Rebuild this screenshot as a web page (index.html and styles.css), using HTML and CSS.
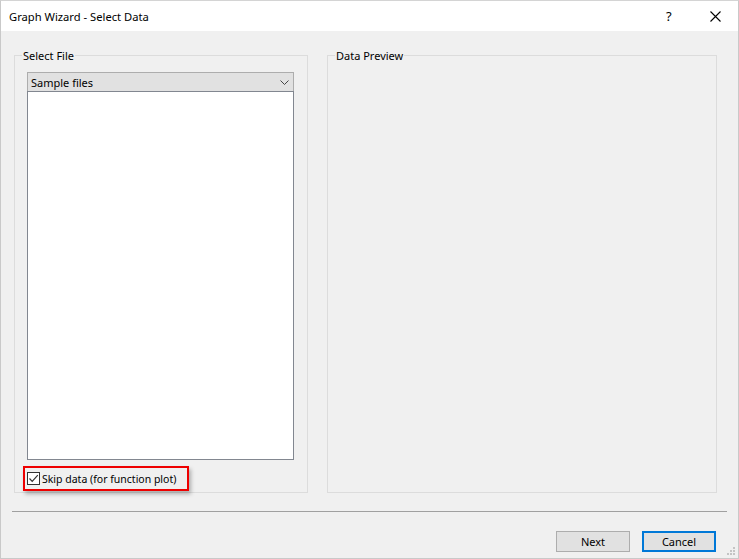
FILE: index.html
```html
<!DOCTYPE html>
<html>
<head>
 <meta charset="utf-8">
 <title>Graph Wizard - Select Data</title>
 <link rel="stylesheet" href="styles.css">
</head>
<body>
<div class="Window">
 <div class="TitleBar">
  <span class="TitleText">Graph Wizard - Select Data</span>
  <span class="TitleHelp">?</span>
  <span class="TitleClose">
   <svg width="11" height="11" viewBox="0 0 11 11"><path d="M0.5 0.5 L10.5 10.5 M10.5 0.5 L0.5 10.5" stroke="#000" stroke-width="1.1" fill="none"/></svg>
  </span>
 </div>

 <div class="DialogBody">
  <div class="GroupRow">
   <fieldset class="Group GroupFile">
    <legend>Select File</legend>
    <div class="Combo">
     <span>Sample files</span>
     <svg width="9" height="5" viewBox="0 0 9 5"><path d="M0.5 0.5 L4.5 4.5 L8.5 0.5" stroke="#444" stroke-width="1" fill="none"/></svg>
    </div>
    <div class="FileList"></div>
    <label class="SkipBox">
     <span class="Check">
      <svg width="11" height="11" viewBox="0 0 11 11"><path d="M1.5 5.5 L4.2 8.3 L9.8 2.2" stroke="#333" stroke-width="1.2" fill="none"/></svg>
     </span>
     Skip data (for function plot)
    </label>
   </fieldset>
   <fieldset class="Group GroupPreview">
    <legend>Data Preview</legend>
   </fieldset>
  </div>

  <hr class="Separator" />

  <div class="ButtonRow">
   <button class="DlgButton">Next</button>
   <button class="DlgButton DlgButtonDefault">Cancel</button>
  </div>
 </div>

 <svg class="Grip" width="9" height="9" viewBox="0 0 9 9">
  <rect x="6" y="0" width="2" height="2" fill="#c4c4c4"/>
  <rect x="3" y="3" width="2" height="2" fill="#c4c4c4"/>
  <rect x="6" y="3" width="2" height="2" fill="#c4c4c4"/>
  <rect x="0" y="6" width="2" height="2" fill="#c4c4c4"/>
  <rect x="3" y="6" width="2" height="2" fill="#c4c4c4"/>
  <rect x="6" y="6" width="2" height="2" fill="#c4c4c4"/>
 </svg>
</div>
</body>
</html>
```

FILE: styles.css
```css
html, body {
 margin:0;
 padding:0;
}
body {
 font-family:"Noto Sans", "Liberation Sans", Arial, sans-serif;
 font-size:11px;
 color:#000000;
 background:#ffffff;
}

.Window {
 position:relative;
 width:739px;
 height:559px;
 box-sizing:border-box;
 border:1px solid #c9c9c9;
 border-top-color:#d4d4d4;
 background:#f0f0f0;
 overflow:hidden;
}

/* Title bar */
.TitleBar {
 display:flex;
 align-items:center;
 height:30px;
 background:#ffffff;
}
.TitleText {
 margin-left:8px;
 flex:1;
 font-size:11.2px;
}
.TitleHelp {
 width:14px;
 margin-right:30px;
 font-size:13px;
}
.TitleClose {
 display:flex;
 margin-right:17px;
}

/* Body */
.DialogBody {
 padding:17px 21px 0 13px;
}
.GroupRow {
 display:flex;
 gap:19px;
}
.Group {
 margin:0;
 border:1px solid #dcdcdc;
 height:445px;
 box-sizing:border-box;
}
.Group legend {
 padding:0 1px;
 margin-left:-5px;
 line-height:15px;
 font-size:11px;
}
.GroupFile {
 width:294px;
 padding:0 13px 1px 12px;
 display:flex;
 flex-direction:column;
}
.GroupPreview {
 width:390px;
 padding:0 12px;
}

.Combo {
 margin-top:9px;
 height:19px;
 box-sizing:border-box;
 border:1px solid #adadad;
 border-bottom:none;
 background:#e1e1e1;
 display:flex;
 align-items:center;
 justify-content:space-between;
 padding:0 4px 0 3px;
}
.FileList {
 height:369px;
 box-sizing:border-box;
 border:1px solid #828790;
 background:#ffffff;
}
.SkipBox {
 margin-top:6px;
 margin-left:-4px;
 width:166px;
 height:25px;
 box-sizing:border-box;
 border:2px solid #ee0000;
 box-shadow:2px 3px 4px rgba(0,0,0,0.28);
 display:flex;
 align-items:center;
 padding-left:2px;
 white-space:nowrap;
 font-size:10.5px;
}
.Check {
 width:13px;
 height:13px;
 box-sizing:border-box;
 border:1px solid #333333;
 background:#ffffff;
 display:flex;
 align-items:center;
 justify-content:center;
 margin-right:2px;
}

.Separator {
 margin:18px -10px 0 -2px;
 border:none;
 border-top:1px solid #a0a0a0;
 height:0;
}

.ButtonRow {
 display:flex;
 justify-content:flex-end;
 gap:12px;
 margin-top:19px;
 margin-right:1px;
}
.DlgButton {
 width:74px;
 height:21px;
 box-sizing:border-box;
 border:1px solid #adadad;
 background:#e1e1e1;
 font-family:inherit;
 font-size:11px;
 padding:0;
 color:#000000;
}
.DlgButtonDefault {
 border:2px solid #0078d7;
}

.Grip {
 position:absolute;
 right:2px;
 bottom:2px;
}
```
